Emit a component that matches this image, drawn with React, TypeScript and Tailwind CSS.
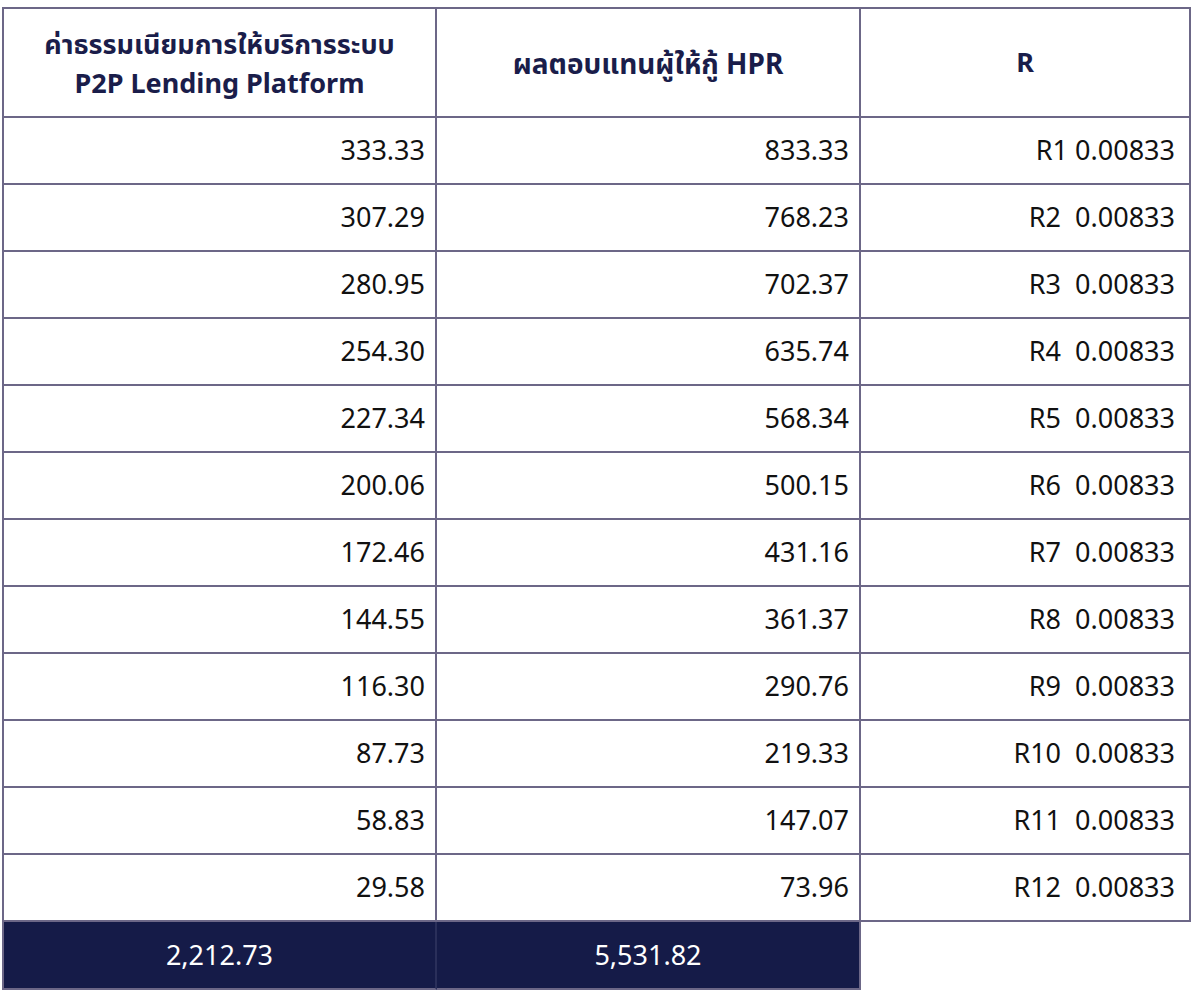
const rows: [string, string, string][] = [
  ['333.33', '833.33', 'R1 0.00833'],
  ['307.29', '768.23', 'R2  0.00833'],
  ['280.95', '702.37', 'R3  0.00833'],
  ['254.30', '635.74', 'R4  0.00833'],
  ['227.34', '568.34', 'R5  0.00833'],
  ['200.06', '500.15', 'R6  0.00833'],
  ['172.46', '431.16', 'R7  0.00833'],
  ['144.55', '361.37', 'R8  0.00833'],
  ['116.30', '290.76', 'R9  0.00833'],
  ['87.73', '219.33', 'R10  0.00833'],
  ['58.83', '147.07', 'R11  0.00833'],
  ['29.58', '73.96', 'R12  0.00833'],
];

const font = { fontFamily: '"Noto Sans", "Noto Sans Thai", "Open Sans", sans-serif' };

export default function App() {
  return (
    <div className="bg-white min-h-[999px] w-[1200px] pt-[7px] pl-[2px]" style={font}>
      <div className="grid grid-cols-[435px_424px_330px]">
        {/* Header */}
        <div className="h-[111px] border-2 border-[#6c6787] flex items-center justify-center text-center text-[27px] font-bold leading-[39px] text-[#1a1d4a]">
          ค่าธรรมเนียมการให้บริการระบบ
          <br />
          P2P Lending Platform
        </div>
        <div className="h-[111px] border-y-2 border-r-2 border-[#6c6787] flex items-center justify-center text-[28px] font-bold text-[#1a1d4a]">
          ผลตอบแทนผู้ให้กู้ HPR
        </div>
        <div className="h-[111px] border-y-2 border-r-2 border-[#6c6787] flex items-center justify-center text-[27px] font-bold text-[#1a1d4a]">
          R
        </div>

        {/* Body */}
        {rows.map(([fee, hpr, r]) => (
          <div key={r} className="contents">
            <div className="h-[67px] border-x-2 border-b-2 border-[#6c6787] flex items-center justify-end pr-[10px] text-[27px] text-[#111]">
              {fee}
            </div>
            <div className="h-[67px] border-r-2 border-b-2 border-[#6c6787] flex items-center justify-end pr-[10px] text-[27px] text-[#111]">
              {hpr}
            </div>
            <div className="h-[67px] border-r-2 border-b-2 border-[#6c6787] flex items-center justify-end pr-[14px] text-[27px] text-[#111] whitespace-pre">
              {r}
            </div>
          </div>
        ))}

        {/* Totals */}
        <div className="h-[68px] bg-[#151b48] border-l-2 border-b-2 border-l-[#6c6787] border-b-[#6c6787] border-r-2 border-r-[#2a2f5a] flex items-center justify-center text-[27px] text-white">
          2,212.73
        </div>
        <div className="h-[68px] bg-[#151b48] border-b-2 border-r-2 border-[#6c6787] flex items-center justify-center text-[27px] text-white">
          5,531.82
        </div>
        <div className="h-[68px]" />
      </div>
    </div>
  );
}
